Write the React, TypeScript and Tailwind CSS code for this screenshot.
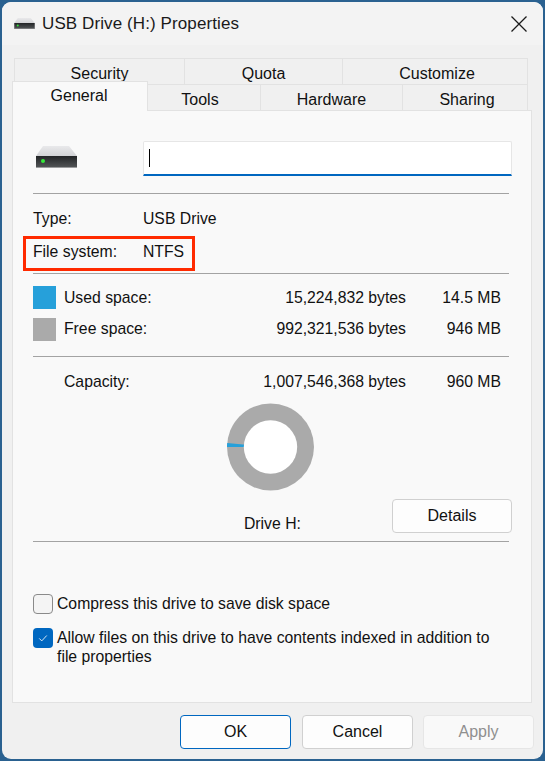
const font = { fontFamily: '"Liberation Sans", Arial, sans-serif' };

function Drive({ className }: { className: string }) {
  return (
    <svg viewBox="0 0 41 22" className={className}>
      <defs>
        <linearGradient id="top" x1="0" y1="0" x2="0" y2="1">
          <stop offset="0" stopColor="#e9e9eb" />
          <stop offset="1" stopColor="#d2d3d6" />
        </linearGradient>
        <linearGradient id="front" x1="0" y1="0" x2="0" y2="1">
          <stop offset="0" stopColor="#222426" />
          <stop offset="1" stopColor="#55585a" />
        </linearGradient>
      </defs>
      <path d="M7 0H33L41 10H0Z" fill="url(#top)" />
      <path d="M0 10H41V21a1 1 0 0 1-1 1H1a1 1 0 0 1-1-1Z" fill="url(#front)" />
      <rect x="0" y="21" width="41" height="1" fill="#9a9b9d" />
      <circle cx="7" cy="15" r="2" fill="#35e83a" />
    </svg>
  );
}

function TopTab({ label, w }: { label: string; w: string }) {
  return (
    <div className={`${w} h-[26px] overflow-hidden border border-b-0 border-l-0 first:border-l border-[#e2e2e2] bg-[#f0f0f0] pt-[2px] text-center text-[16px] leading-[26px] text-[#111]`}>
      {label}
    </div>
  );
}

function Button({ label, className }: { label: string; className: string }) {
  return (
    <div className={`flex h-[34px] w-[111px] items-center justify-center rounded-[4px] border text-[16px] ${className}`}>
      {label}
    </div>
  );
}

function Sep({ className }: { className: string }) {
  return <div className={`mr-[22px] h-px bg-[#a3a3a3] ${className}`} />;
}

function SpaceRow({ color, label, bytes, size, text }: { color: string; label: string; bytes: string; size: string; text: string }) {
  return (
    <div className="flex items-center">
      <div className={`h-[23px] w-[23px] shrink-0 ${color}`} />
      <div className={`flex ${text}`}>
        <div className="ml-[8px] w-[150px]">{label}</div>
        <div className="w-[192px] text-right">{bytes}</div>
        <div className="w-[95px] text-right">{size}</div>
      </div>
    </div>
  );
}

export default function App() {
  return (
    <div className="h-[761px] w-[545px] overflow-hidden bg-[#2a6190] px-[2px] pt-[2px] pb-[2px]" style={font}>
      <div className="flex h-[757px] w-[541px] flex-col overflow-hidden rounded-[9px] bg-[#f0f0f0]">
        <div className="flex h-[43px] shrink-0 items-center bg-[#f3f3f3] pl-[12px] pr-[16px]">
          <Drive className="h-[11px] w-[21px]" />
          <div className="ml-[7px] text-[17px] tracking-[0.1px] text-[#1a1a1a]">USB Drive (H:) Properties</div>
          <svg viewBox="0 0 16 16" className="ml-auto h-[16px] w-[16px]" fill="none" stroke="#1a1a1a" strokeWidth="1.3">
            <path d="M.5.5l15 15M15.5.5l-15 15" />
          </svg>
        </div>

        <div className="mt-[13px] flex h-[26px] shrink-0 pl-[12px]">
          <TopTab label="Security" w="w-[171px]" />
          <TopTab label="Quota" w="w-[158px]" />
          <div className="h-[26px] w-[185px] overflow-hidden border-t border-r border-[#e2e2e2] bg-[#f0f0f0] pt-[2px] pl-[4px] text-center text-[16px] leading-[26px] text-[#111]">Customize</div>
        </div>
        <div className="relative z-10 -mt-[3px] -mb-px flex h-[30px] shrink-0 items-start pl-[10px]">
          <div className="h-[30px] w-[136px] border border-b-0 border-[#e2e2e2] bg-[#f9f9f9] pr-[2px] pt-[1px] text-center text-[16px] leading-[26px] text-[#111]">General</div>
          <div className="mt-[3px] flex">
            <div className="h-[26px] w-[113px] overflow-hidden border-t border-r border-[#e2e2e2] bg-[#f0f0f0] pt-[2px] pr-[8px] text-center text-[16px] leading-[26px] text-[#111]">Tools</div>
            <div className="h-[26px] w-[142px] overflow-hidden border-t border-r border-[#e2e2e2] bg-[#f0f0f0] pt-[2px] text-center text-[16px] leading-[26px] text-[#111]">Hardware</div>
            <div className="h-[26px] w-[125px] overflow-hidden border-t border-r border-[#e2e2e2] bg-[#f0f0f0] pt-[2px] pl-[4px] text-center text-[16px] leading-[26px] text-[#111]">Sharing</div>
          </div>
        </div>

        <div className="ml-[10px] h-[593px] w-[520px] shrink-0 border border-[#e2e2e2] bg-[#f9f9f9] pl-[20px] text-[15.75px] leading-[20px] text-[#111]">
          <div className="mt-[30px] flex h-[35px] items-center">
            <Drive className="mb-[3px] ml-[3px] h-[22px] w-[41px]" />
            <div className="ml-[66px] flex h-[35px] w-[369px] items-center rounded-t-[2px] border border-b-2 border-[#e6e6e6] border-b-[#0067c0] bg-white pl-[5px]">
              <div className="h-[18px] w-px bg-black" />
            </div>
          </div>
          <Sep className="mt-[17px]" />
          <div className="mt-[15px] flex">
            <div className="w-[110px]">Type:</div>
            <div>USB Drive</div>
          </div>
          <div className="relative mt-[13px] flex">
            <div className="absolute -left-[10px] -top-[6px] h-[35px] w-[172px] border-[3px] border-[#ff2a00]" />
            <div className="w-[110px]">File system:</div>
            <div>NTFS</div>
          </div>
          <Sep className="mt-[11px]" />
          <div className="mt-[12px] flex flex-col gap-[9px]">
            <SpaceRow color="bg-[#26a0da]" text="" label="Used space:" bytes="15,224,832 bytes" size="14.5 MB" />
            <SpaceRow color="bg-[#aaaaaa]" text="mb-[2px]" label="Free space:" bytes="992,321,536 bytes" size="946 MB" />
          </div>
          <Sep className="mt-[15px]" />
          <div className="mt-[15px] flex">
            <div className="ml-[31px] w-[150px]">Capacity:</div>
            <div className="w-[192px] text-right">1,007,546,368 bytes</div>
            <div className="w-[95px] text-right">960 MB</div>
          </div>
          <svg viewBox="0 0 88 88" className="ml-[194px] mt-[11px] h-[88px] w-[87px]">
            <circle cx="44" cy="44" r="44" fill="#aaaaaa" />
            <path d="M44 44L0 44A44 44 0 0 1 .2 39.9Z" fill="#26a0da" />
            <circle cx="44" cy="44" r="27" fill="#fff" />
          </svg>
          <div className="mt-[8px] flex h-[34px] items-start">
            <div className="ml-[211px] mt-[15px] w-[148px]">Drive H:</div>
            <Button label="Details" className="w-[120px] border-[#d0d0d0] bg-[#fdfdfd]" />
          </div>
          <Sep className="mt-[8px]" />
          <div className="mt-[52px] flex items-center">
            <div className="h-[20px] w-[20px] rounded-[4px] border border-[#8a8a8a] bg-[#f4f4f4]" />
            <div className="ml-[4px]">Compress this drive to save disk space</div>
          </div>
          <div className="mt-[14px] flex items-start">
            <div className="flex h-[20px] w-[20px] shrink-0 items-center justify-center rounded-[4px] bg-[#0067c0]">
              <svg viewBox="0 0 12 12" className="h-[10px] w-[10px]" fill="none" stroke="#fff" strokeWidth="1">
                <path d="M1.5 6.5l3 3L10.5 3" />
              </svg>
            </div>
            <div className="ml-[4px] w-[440px] leading-[19px]">Allow files on this drive to have contents indexed in addition to file properties</div>
          </div>
        </div>

        <div className="mt-[12px] flex gap-[11px] pl-[178px]">
          <Button label="OK" className="border-[#0067c0] bg-[#fdfdfd] text-[#111]" />
          <Button label="Cancel" className="border-[#d0d0d0] bg-[#fdfdfd] text-[#111]" />
          <Button label="Apply" className="-ml-px border-[#e6e6e6] bg-[#f9f9f9] text-[#8f8f8f]" />
        </div>
      </div>
    </div>
  );
}
